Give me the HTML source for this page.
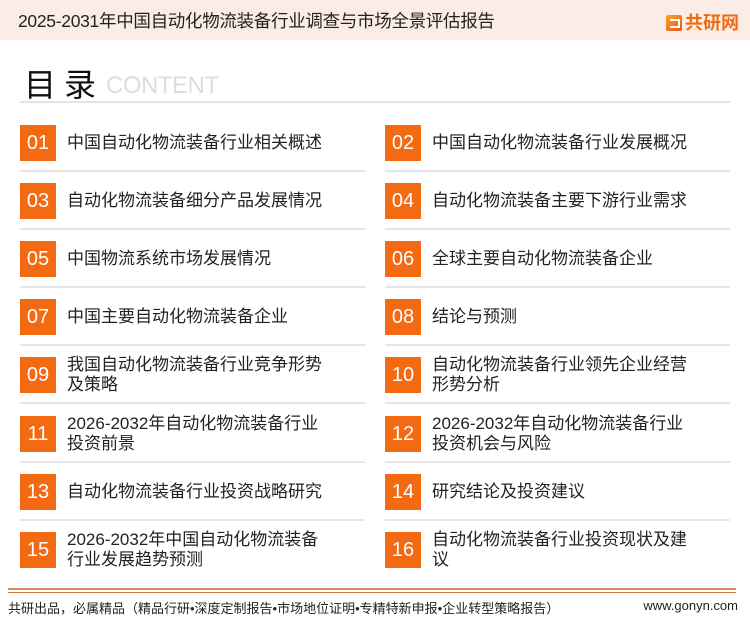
<!DOCTYPE html>
<html><head><meta charset="utf-8"><style>
*{margin:0;padding:0;box-sizing:border-box}
body{width:750px;height:622px;background:#fff;position:relative;overflow:hidden;font-family:"Liberation Sans","Noto Sans CJK SC",sans-serif;color:#222}
.hdr{position:absolute;left:0;top:0;width:750px;height:40px;background:#fbede6}
.hdr .t{position:absolute;left:18px;top:8px;font-size:17.5px;color:#222;letter-spacing:-0.3px}
.logo{position:absolute;left:666px;top:9px;font-size:18px;font-weight:bold;color:#f06a14}
.logo i{display:inline-block;width:16px;height:16px;background:linear-gradient(135deg,#f6a623,#e8541a);border-radius:2px;vertical-align:-2px;margin-right:3px;position:relative}
.logo i:after{content:"";position:absolute;left:4px;top:4px;width:8px;height:5px;border:2px solid #fff;border-left:none}
.ml{position:absolute;left:24px;top:60px;font-size:32px;color:#111;letter-spacing:8px}
.ct{position:absolute;left:106px;top:72px;font-size:24px;color:#ddd;letter-spacing:-0.5px}
.hl{position:absolute;left:20px;top:101px;width:710px;height:2px;background:#e4e4e4}
.it{position:absolute;width:345px;height:46px}
.it .n{position:absolute;left:0;top:0;width:36px;height:36px;background:#f36a12;color:#fff;font-size:20px;line-height:36px;text-align:center}
.it .x{position:absolute;left:47px;top:0;height:36px;width:272px;display:flex;align-items:center;font-size:17px;line-height:20px;color:#222}
.it .s{position:absolute;left:0;top:45px;width:345px;height:2px;background:#e6e6e6}
.f1{position:absolute;left:8px;top:588px;width:728px;height:2px;background:#e08a50}
.f2{position:absolute;left:8px;top:592px;width:728px;height:1px;background:#c87a4a}
.ft{position:absolute;left:8px;top:598px;font-size:13px;color:#222}
.fr{position:absolute;right:12px;top:598px;font-size:13px;color:#222}
</style></head><body>
<div class="hdr"><div class="t">2025-2031年中国自动化物流装备行业调查与市场全景评估报告</div><div class="logo"><i></i>共研网</div></div>
<div class="ml">目录</div><div class="ct">CONTENT</div>
<div class="hl"></div>

<div class="it" style="left:20px;top:125px"><div class="n">01</div><div class="x">中国自动化物流装备行业相关概述</div><div class="s"></div></div>
<div class="it" style="left:385px;top:125px"><div class="n">02</div><div class="x">中国自动化物流装备行业发展概况</div><div class="s"></div></div>
<div class="it" style="left:20px;top:183px"><div class="n">03</div><div class="x">自动化物流装备细分产品发展情况</div><div class="s"></div></div>
<div class="it" style="left:385px;top:183px"><div class="n">04</div><div class="x">自动化物流装备主要下游行业需求</div><div class="s"></div></div>
<div class="it" style="left:20px;top:241px"><div class="n">05</div><div class="x">中国物流系统市场发展情况</div><div class="s"></div></div>
<div class="it" style="left:385px;top:241px"><div class="n">06</div><div class="x">全球主要自动化物流装备企业</div><div class="s"></div></div>
<div class="it" style="left:20px;top:299px"><div class="n">07</div><div class="x">中国主要自动化物流装备企业</div><div class="s"></div></div>
<div class="it" style="left:385px;top:299px"><div class="n">08</div><div class="x">结论与预测</div><div class="s"></div></div>
<div class="it" style="left:20px;top:357px"><div class="n">09</div><div class="x">我国自动化物流装备行业竞争形势<br>及策略</div><div class="s"></div></div>
<div class="it" style="left:385px;top:357px"><div class="n">10</div><div class="x">自动化物流装备行业领先企业经营<br>形势分析</div><div class="s"></div></div>
<div class="it" style="left:20px;top:416px"><div class="n">11</div><div class="x">2026-2032年自动化物流装备行业<br>投资前景</div><div class="s"></div></div>
<div class="it" style="left:385px;top:416px"><div class="n">12</div><div class="x">2026-2032年自动化物流装备行业<br>投资机会与风险</div><div class="s"></div></div>
<div class="it" style="left:20px;top:474px"><div class="n">13</div><div class="x">自动化物流装备行业投资战略研究</div><div class="s"></div></div>
<div class="it" style="left:385px;top:474px"><div class="n">14</div><div class="x">研究结论及投资建议</div><div class="s"></div></div>
<div class="it" style="left:20px;top:532px"><div class="n">15</div><div class="x">2026-2032年中国自动化物流装备<br>行业发展趋势预测</div></div>
<div class="it" style="left:385px;top:532px"><div class="n">16</div><div class="x">自动化物流装备行业投资现状及建<br>议</div></div>

<div class="f1"></div><div class="f2"></div>
<div class="ft">共研出品，必属精品（精品行研•深度定制报告•市场地位证明•专精特新申报•企业转型策略报告）</div>
<div class="fr">www.gonyn.com</div>
</body></html>
